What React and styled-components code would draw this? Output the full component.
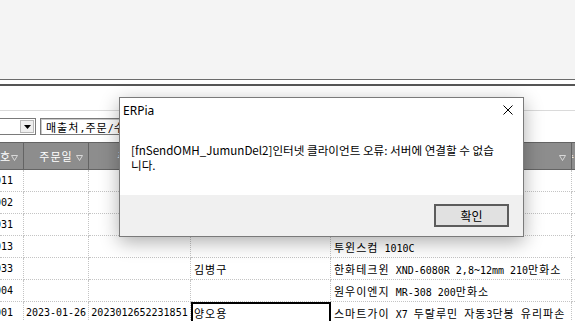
import React from "react";
import styled, { createGlobalStyle } from "styled-components";

const GlobalStyle = createGlobalStyle`
  html, body {
    margin: 0;
    padding: 0;
    background: #fff;
  }
  body {
    overflow: hidden;
  }
`;

const Screen = styled.div`
  position: relative;
  width: 575px;
  height: 321px;
  overflow: hidden;
  background: #fff;
  font-family: "Noto Sans CJK KR", sans-serif;
`;

const TopPane = styled.div`
  height: 79px;
  background: #f4f4f4;
`;

const Splitter = styled.div`
  height: 4px;
  background: #fff;
  border-top: 1px solid #6b6b6b;
  border-bottom: 2px solid #555;
`;

const Toolbar = styled.div`
  margin-top: 24px;
  border-top: 1px solid #dadada;
  padding-top: 7px;
  height: 17px;
  display: flex;
  align-items: center;
  gap: 4px;
`;

const Combo = styled.div`
  width: 36px;
  height: 17px;
  box-sizing: border-box;
  border: 1px solid #7a7a7a;
  border-left: none;
  background: #fff;
  display: flex;
  justify-content: flex-end;
  padding: 1px;
`;

const DropButton = styled.div`
  width: 14px;
  box-sizing: border-box;
  background: #efefef;
  border: 1px solid #b9b9b9;
  display: flex;
  align-items: center;
  justify-content: center;
`;

const SearchField = styled.div`
  width: 300px;
  height: 17px;
  box-sizing: border-box;
  border: 1px solid #7a7a7a;
  box-shadow: inset 1px 1px 0 #c8c8c8;
  padding-left: 5px;
  display: flex;
  align-items: center;
  font-family: "DejaVu Sans Mono", "Noto Sans CJK KR", monospace;
  font-size: 10px;
  color: #000;
  white-space: nowrap;
  overflow: hidden;
`;

const Grid = styled.div`
  margin-top: 7px;
  display: grid;
  grid-template-columns: 24px 65px 102px 140px 241px 1fr;
  grid-template-rows: 28px;
  grid-auto-rows: 22px;
`;

const HeaderCell = styled.div`
  position: relative;
  display: flex;
  align-items: center;
  justify-content: ${(p) => (p.$end ? "flex-end" : "center")};
  padding-right: ${(p) => (p.$end ? "12px" : "0")};
  background: #8d8d8d;
  border-top: 1px solid #646464;
  border-bottom: 1px solid #646464;
  border-right: 1px solid #646464;
  color: #fff;
  font-size: 11px;
  letter-spacing: 1px;
  white-space: nowrap;
  overflow: hidden;
`;

const SortMark = styled.svg`
  position: absolute;
  right: 5px;
  top: 12px;
`;

const Cell = styled.div`
  display: flex;
  align-items: center;
  justify-content: ${(p) =>
    p.$align === "end" ? "flex-end" : p.$align === "center" ? "center" : "flex-start"};
  padding: 0 ${(p) => (p.$align === "end" ? "10px" : "3px")} 0 3px;
  border-right: 1px dotted #c4c4c4;
  border-bottom: 1px dotted #c4c4c4;
  font-family: "DejaVu Sans Mono", "Noto Sans CJK KR", monospace;
  font-size: 10px;
  color: #000;
  white-space: nowrap;
  overflow: hidden;
  outline: ${(p) => (p.$selected ? "2px solid #000" : "none")};
  outline-offset: -2px;
`;

const Text = styled.span`
  white-space: pre;
`;

const Ko = styled.span`
  font-family: "Noto Sans CJK KR", sans-serif;
  font-size: 11px;
  letter-spacing: 1px;
`;

const Dialog = styled.div`
  position: absolute;
  left: 119px;
  top: 97px;
  width: 405px;
  height: 140px;
  box-sizing: border-box;
  border: 1px solid #7a7a7a;
  background: #fff;
  box-shadow: 0 5px 18px rgba(0, 0, 0, 0.32);
  display: flex;
  flex-direction: column;
`;

const TitleBar = styled.div`
  height: 24px;
  display: flex;
  align-items: center;
  justify-content: space-between;
  padding-left: 3px;
  font-family: "Noto Sans", sans-serif;
  font-size: 12px;
  color: #000;
`;

const CloseButton = styled.div`
  width: 30px;
  height: 24px;
  display: flex;
  align-items: center;
  justify-content: center;
`;

const Message = styled.div`
  flex: 1;
  padding: 21px 0 0 11px;
  font-size: 11.6px;
  line-height: 15px;
  color: #000;
  white-space: nowrap;
`;

const Footer = styled.div`
  height: 41px;
  box-sizing: border-box;
  background: #f0f0f0;
  display: flex;
  justify-content: flex-end;
  align-items: flex-start;
  padding: 9px 14px 0 0;
`;

const OkButton = styled.button`
  width: 75px;
  height: 23px;
  box-sizing: border-box;
  padding: 0;
  border: 2px solid #5c5c5c;
  background: #e1e1e1;
  font-family: "Noto Sans CJK KR", sans-serif;
  font-size: 12px;
  color: #000;
`;

const headers = ["전표번호", "주문일", "주문번호", "주문자", "상품명", "수량"];

const rows = [
  { no: "2301011" },
  { no: "2301002" },
  { no: "2301031" },
  { no: "2301013", item: "투윈스컴 1010C" },
  { no: "2301033", name: "김병구", item: "한화테크윈 XND-6080R 2,8~12mm 210만화소" },
  { no: "2301004", item: "원우이엔지 MR-308 200만화소" },
  {
    no: "2301001",
    date: "2023-01-26",
    order: "2023012652231851",
    name: "양오용",
    item: "스마트가이 X7 두랄루민 자동3단봉 유리파손",
    selected: true,
  },
];

// korean runs get the wider gulim-like spacing
const mixed = (text) => (
  <Text>
    {(text || "")
      .split(/([\u3131-\uD79D]+)/)
      .map((part, i) =>
        /[\u3131-\uD79D]/.test(part) ? <Ko key={i}>{part}</Ko> : part
      )}
  </Text>
);

function SortIcon() {
  return (
    <SortMark width="7" height="6" viewBox="0 0 7 6">
      <path d="M0.5 0.5 H6.5 L3.5 5.5 Z" fill="none" stroke="#d8d8d8" strokeWidth="1" />
    </SortMark>
  );
}

export default function App() {
  return (
    <Screen>
      <GlobalStyle />
      <TopPane />
      <Splitter />
      <Toolbar>
        <Combo>
          <DropButton>
            <svg width="7" height="4" viewBox="0 0 7 4">
              <path d="M0 0 H7 L3.5 4 Z" fill="#000" />
            </svg>
          </DropButton>
        </Combo>
        <SearchField>{mixed("매출처,주문/수집처")}</SearchField>
      </Toolbar>
      <Grid>
        {headers.map((h, i) => (
          <HeaderCell key={h} $end={i === 0}>
            {h}
            <SortIcon />
          </HeaderCell>
        ))}
        {rows.map((r) => (
          <React.Fragment key={r.no}>
            <Cell $align="end">{r.no}</Cell>
            <Cell $align="center">{r.date}</Cell>
            <Cell $align="center">{r.order}</Cell>
            <Cell $selected={r.selected}>{mixed(r.name)}</Cell>
            <Cell>{mixed(r.item)}</Cell>
            <Cell />
          </React.Fragment>
        ))}
      </Grid>
      <Dialog>
        <TitleBar>
          ERPia
          <CloseButton>
            <svg width="10" height="10" viewBox="0 0 10 10">
              <path d="M0.5 0.5 L9.5 9.5 M9.5 0.5 L0.5 9.5" stroke="#000" strokeWidth="1" />
            </svg>
          </CloseButton>
        </TitleBar>
        <Message>
          [fnSendOMH_JumunDel2]인터넷 클라이언트 오류: 서버에 연결할 수 없습
          <br />
          니다.
        </Message>
        <Footer>
          <OkButton>확인</OkButton>
        </Footer>
      </Dialog>
    </Screen>
  );
}
